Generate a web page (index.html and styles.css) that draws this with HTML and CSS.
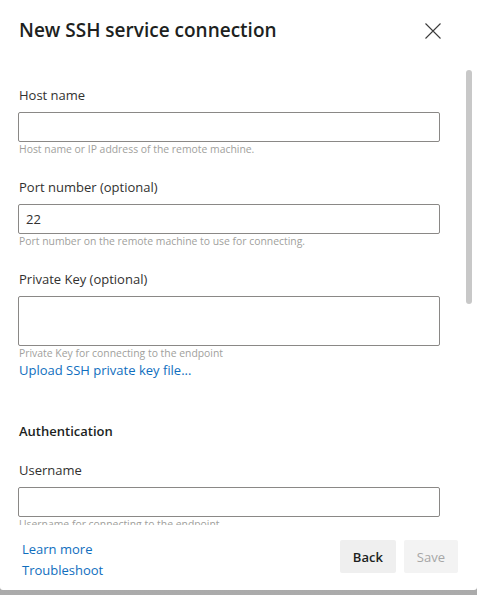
FILE: index.html
```html
<!DOCTYPE html>
<html lang="en">
<head>
<meta charset="utf-8">
<title>New SSH service connection</title>
<link rel="stylesheet" href="styles.css">
</head>
<body>
<div class="panel">
  <div class="header">
    <h1 class="title">New SSH service connection</h1>
    <button class="close" type="button" aria-label="Close">
      <svg width="16" height="16" viewBox="0 0 16 16"><path d="M0.5 0.5 L15.5 15.5 M15.5 0.5 L0.5 15.5" stroke="#3b3b3b" stroke-width="1.1" fill="none"/></svg>
    </button>
  </div>
  <div class="content">
    <div class="field">
      <label class="label">Host name</label>
      <input class="input" type="text">
      <div class="helper">Host name or IP address of the remote machine.</div>
    </div>
    <div class="field">
      <label class="label">Port number (optional)</label>
      <input class="input" type="text" value="22">
      <div class="helper">Port number on the remote machine to use for connecting.</div>
    </div>
    <div class="field">
      <label class="label">Private Key (optional)</label>
      <textarea class="input area"></textarea>
      <div class="helper">Private Key for connecting to the endpoint</div>
      <a class="link upload" href="#">Upload SSH private key file...</a>
    </div>
    <h2 class="section">Authentication</h2>
    <div class="field first">
      <label class="label">Username</label>
      <input class="input" type="text">
      <div class="helper">Username for connecting to the endpoint</div>
    </div>
  </div>
  <div class="scrollbar"><div class="thumb"></div></div>
  <div class="footer">
    <div class="links">
      <a class="link" href="#">Learn more</a>
      <a class="link" href="#">Troubleshoot</a>
    </div>
    <div class="buttons">
      <button class="btn" type="button">Back</button>
      <button class="btn disabled" type="button">Save</button>
    </div>
  </div>
</div>
</body>
</html>
```
FILE: styles.css
```css
html, body {
  margin: 0;
  padding: 0;
}
body {
  width: 477px;
  height: 595px;
  overflow: hidden;
  background: linear-gradient(#8c8c8c, #ababab);
  font-family: "Open Sans", "Noto Sans", sans-serif;
  color: #323130;
}
.panel {
  position: relative;
  height: 590px;
  background: #fff;
  border-radius: 0 0 3px 3px;
  display: flex;
  flex-direction: column;
}
.header {
  height: 62px;
  flex: none;
  display: flex;
  justify-content: space-between;
  align-items: flex-start;
  padding: 16px 28px 0 19px;
  box-sizing: border-box;
}
.title {
  margin: 0;
  font-size: 19px;
  line-height: 28px;
  font-weight: 600;
  color: #201f1e;
}
.close {
  width: 32px;
  height: 32px;
  margin-top: -1px;
  border: 0;
  padding: 0;
  background: transparent;
  display: flex;
  align-items: center;
  justify-content: center;
}
.close svg {
  display: block;
}
.content {
  flex: 1;
  overflow: hidden;
  padding: 23px 37px 0 18px;
}
.scrollbar {
  position: absolute;
  top: 62px;
  right: 5px;
  width: 6px;
  height: 463px;
  padding-top: 8px;
  box-sizing: border-box;
}
.thumb {
  height: 234px;
  border-radius: 3px;
  background: #c8c8c8;
}
.field {
  display: flex;
  flex-direction: column;
  align-items: flex-start;
  margin-top: 21px;
}
.field:first-child,
.field.first {
  margin-top: 0;
}
.label {
  font-size: 13px;
  line-height: 20px;
  margin: 0 0 7px 1px;
  color: #323130;
}
.input {
  width: 100%;
  height: 30px;
  box-sizing: border-box;
  border: 1px solid #8a8886;
  border-radius: 2px;
  padding: 0 7px;
  margin: 0;
  font-family: inherit;
  font-size: 13px;
  color: #323130;
  background: #fff;
  outline: none;
}
.area {
  height: 50px;
  resize: none;
  display: block;
}
.helper {
  font-size: 10.4px;
  line-height: 14px;
  color: #a19f9d;
  margin-left: 1px;
  white-space: nowrap;
}
.link {
  font-size: 13px;
  line-height: 20px;
  color: #106ebe;
  text-decoration: none;
}
.upload {
  margin-left: 1px;
  line-height: 21px;
}
.section {
  margin: 40px 0 19px 1px;
  font-size: 13px;
  line-height: 20px;
  font-weight: 600;
  color: #201f1e;
}
.footer {
  height: 65px;
  flex: none;
  box-sizing: border-box;
  padding: 14px 19px 0 22px;
  display: flex;
  justify-content: space-between;
  align-items: flex-start;
}
.links {
  display: flex;
  flex-direction: column;
}
.links .link {
  line-height: 21px;
}
.buttons {
  display: flex;
  gap: 8px;
  margin-top: 1px;
}
.btn {
  height: 33px;
  padding: 0 13px;
  border: 0;
  border-radius: 2px;
  background: #efefef;
  font-family: inherit;
  font-size: 13px;
  font-weight: 600;
  color: #201f1e;
}
.btn.disabled {
  padding: 0 13px;
  color: #a6a6a6;
  font-weight: 400;
  background: #f3f3f3;
}
```
